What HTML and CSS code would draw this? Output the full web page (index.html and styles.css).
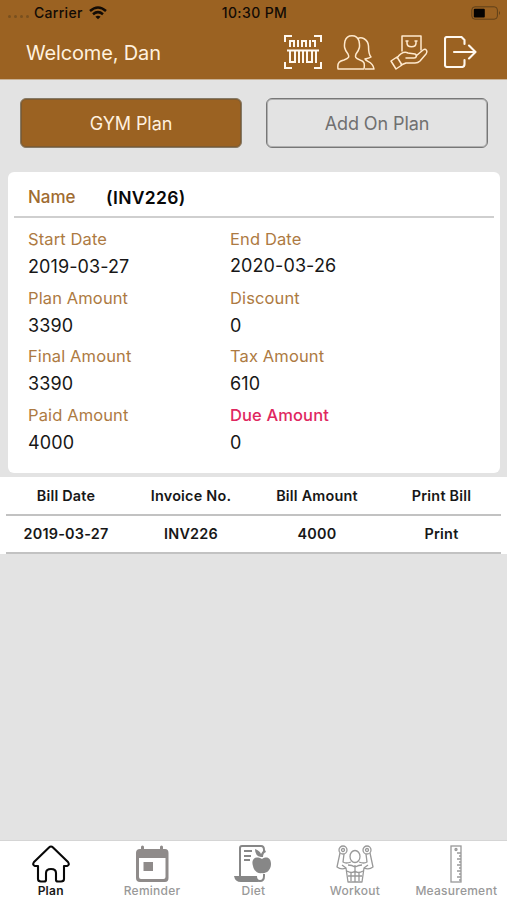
FILE: index.html
```html
<!DOCTYPE html>
<html lang="en">
<head>
<meta charset="utf-8">
<title>Gym Plan</title>
<link rel="stylesheet" href="styles.css">
</head>
<body>
<div class="app">
  <header class="header">
    <div class="status">
      <div class="carrier">
        <span class="dots"><i></i><i></i><i></i><i></i></span>
        <span class="carrier-name">Carrier</span>
        <svg class="wifi" width="18" height="14" viewBox="0 0 18 14" fill="none" stroke="#120b05" stroke-width="2.5"><path d="M1 5Q9-2 17 5M4 8.2Q9 4 14 8.2"/><path d="M6.4 10.7Q9 8.8 11.6 10.7L9 13.3Z" fill="#120b05" stroke="none"/></svg>
      </div>
      <time class="clock">10:30 PM</time>
      <svg class="battery" width="30" height="14" viewBox="0 0 30 14"><rect x=".8" y=".8" width="25.6" height="12.4" rx="3.2" fill="none" stroke="#604019"/><rect x="2.8" y="2.7" width="11" height="8.8" rx="1" fill="#050302"/><path d="M28 5Q30 7 28 9Z" fill="#604019"/></svg>
    </div>
    <div class="titlebar">
      <h1 class="welcome">Welcome, Dan</h1>
      <nav class="actions">
        <svg width="38" height="34" viewBox="0 0 38 34" fill="none" stroke="#fff8ef" stroke-width="2"><path d="M1 7V1H8M30 1H37V7M1 27V33H8M30 33H37V27M3 15.500H35"/><path d="M6 12V6H10V12M14 5V12M18 12V6H22V12M26 5V12M28 6H31V12M6 16V27H11V16M15 16V28M19 16V28M23 16V27H28V16M32 16V28"/></svg>
        <svg width="38" height="35" viewBox="0 0 38 35" fill="none" stroke="#ffe9cd" stroke-width="1.5" stroke-linejoin="round"><path d="M1 34C0 27 3 26 7 25C12 23 12.500 22 11 19C7 14 7 11 8 6C10-1 20-1 22 6C23 11 23 14 19 19C18 22 18 23 23 25C27 26 28 28 27 34Z"/><path d="M20.500 4C24 1 31 4 31.500 11C31.500 17 32 20 34 22C31 24 30 23 28 24C29 27 36 26 37 34H28"/></svg>
        <svg width="38" height="35" viewBox="0 0 38 35" fill="none" stroke="#ffe9cd" stroke-width="1.5" stroke-linejoin="round" stroke-linecap="round"><path d="M12 16V1H31V15M17 6V8C17 13 26 13 26 8V6M16 6H18M25 6H27"/><path d="M1 26L7 22L12 30L6 34ZM7 23C10 19 14 16 18 18L25 19C27 20 27 23 24 23H16M26 21L33 15C36 13 38 16 36 19L30 26Q28 28 25 28H16L11 30"/></svg>
        <svg class="exit" width="33" height="32" viewBox="0 0 33 32" fill="none" stroke="#fff8ef" stroke-width="2.1" stroke-linecap="round" stroke-linejoin="round"><path d="M20.500 8V4L17.500 1H3Q1 1 1 3V29Q1 31 3 31H18Q20.500 31 20.500 28V24M10 16H31M25 9.500L31.500 16L25 22.500"/></svg>
      </nav>
    </div>
  </header>

  <main class="content">
    <div class="switch">
      <button class="plan-button selected">GYM Plan</button>
      <button class="plan-button">Add On Plan</button>
    </div>
    <section class="card">
      <div class="card-head"><span class="name">Name</span><strong class="invoice">(INV226)</strong></div>
      <dl class="details">
        <div><dt>Start Date</dt><dd>2019-03-27</dd></div>
        <div class="raised"><dt>End Date</dt><dd>2020-03-26</dd></div>
        <div><dt>Plan Amount</dt><dd>3390</dd></div>
        <div><dt>Discount</dt><dd>0</dd></div>
        <div><dt>Final Amount</dt><dd>3390</dd></div>
        <div><dt>Tax Amount</dt><dd>610</dd></div>
        <div><dt>Paid Amount</dt><dd>4000</dd></div>
        <div class="due"><dt>Due Amount</dt><dd>0</dd></div>
      </dl>
    </section>
    <section class="bills">
      <div class="bill-row"><span>Bill Date</span><span>Invoice No.</span><span>Bill Amount</span><span>Print Bill</span></div>
      <div class="bill-row"><span>2019-03-27</span><span>INV226</span><span>4000</span><span>Print</span></div>
    </section>
  </main>

  <nav class="tabs">
    <a class="tab active"><svg width="38" height="38" viewBox="0 0 38 38" fill="none" stroke="#080808" stroke-width="2.1" stroke-linejoin="round"><path d="M17 2.500Q19 .5 21 2.500L36 17Q38 20 35 21H32V34Q32 36.500 29 36.500H26Q24 36.500 24 35V28Q24 24 19 24Q14 24 14 28V35Q14 36.500 12 36.500H9Q6 36.500 6 34V21H3Q0 20 2 17Z"/></svg><span>Plan</span></a>
    <a class="tab"><svg width="38" height="38" viewBox="0 0 38 38" fill="#8f8b8a"><path fill-rule="evenodd" d="M8 2Q8 .5 9.500 .5T11 2V4H27V2Q27 .5 28.500 .5T30 2V4H32Q35.500 4 35.500 8V33Q35.500 37 32 37H7Q3 37 3 33V8Q3 4 7 4H8ZM6 13V32Q6 34 8 34H30.500Q32.500 34 32.500 32V13Z"/><path d="M10.500 17H20V26H10.500Z"/></svg><span>Reminder</span></a>
    <a class="tab"><svg width="38" height="38" viewBox="0 0 38 38"><path d="M6 31V3Q6 1 8 1H27Q30 1 30 5V7M30 29V31Q30 36 26 36Q22 36 22 31" fill="none" stroke="#878787" stroke-width="2"/><path d="M0 31H22Q21 35 25 37H7Q1 37 0 31Z" fill="#878787"/><path d="M10 6H18M10 11H17M10 15H16" stroke="#878787" stroke-width="2"/><path d="M28 14C20 10 17 15 19 21C20 27 25 29 28 28C31 29 37 26 37 19C37 13 33 11 28 14ZM27 12Q21 11 21 4Q26 6 27 9Q28 6 31 5L32 7Q29 8 29 12Z" fill="#878787"/></svg><span>Diet</span></a>
    <a class="tab"><svg width="38" height="38" viewBox="0 0 38 38" fill="none" stroke="#999" stroke-width="1.3" stroke-linejoin="round"><circle cx="7" cy="5" r="4"/><circle cx="31" cy="5" r="4"/><circle cx="7" cy="5" r="1.500"/><circle cx="31" cy="5" r="1.500"/><ellipse cx="19" cy="11.500" rx="5" ry="6"/><path d="M4 8L1 22Q5 25 10 23L12 37H26L28 23Q33 25 37 22L34 8M8 9L7 17Q10 19 15 17M30 9L31 17Q28 19 23 17M12 20Q16 20 19 22Q23 20 26 20M19 20V37M11 26Q16 29 19 26Q22 29 27 26M12 31H26M15 27V36M23 27V36M6 20L10 23M32 20L28 23"/></svg><span>Workout</span></a>
    <a class="tab"><svg width="38" height="38" viewBox="0 0 38 38" fill="none" stroke="#999" stroke-width="1.3"><rect x="14" y="1" width="10" height="36"/><circle cx="19" cy="4.500" r="1"/><path d="M20 8H24M22 11H24M20 14H24M22 17H24M20 20H24M22 23H24M20 26H24M22 29H24M20 32H24M22 35H24"/></svg><span>Measurement</span></a>
  </nav>
</div>
</body>
</html>
```
FILE: styles.css
```css
* { box-sizing: border-box; }
body { margin: 0; font-family: Inter, "Liberation Sans", sans-serif; background: #e3e3e3; color: #171717; }
.app { height: 900px; display: flex; flex-direction: column; overflow: hidden; }
svg { display: block; flex: none; }
.header { height: 80px; background: #9b6222; border-bottom: 1px solid #c9b296; }
.status { height: 25px; display: grid; grid-template-columns: 1fr auto 1fr; align-items: center; padding: 0 6px 0 8px; color: #120b05; font-size: 14px; font-weight: 500; letter-spacing: .3px; }
.carrier { display: flex; align-items: center; }
.dots { display: flex; gap: 3px; width: 26px; padding-top: 8px; }
.dots i { width: 3px; height: 3px; border-radius: 50%; background: #79501e; }
.wifi { margin-left: 6px; }
.clock { letter-spacing: .4px; }
.battery { justify-self: end; }
.titlebar { height: 55px; display: flex; align-items: center; justify-content: space-between; padding: 0 30px 0 26px; }
.welcome { margin: 0; font-size: 20px; font-weight: 400; letter-spacing: -.15px; color: #fff1df; }
.actions { display: flex; align-items: center; gap: 15px; margin-top: -1px; }
.exit { margin-left: 1px; }
.content { flex: 1; }
.switch { display: grid; grid-template-columns: 222px 222px; gap: 24px; padding: 18px 0 0 20px; height: 92px; }
.plan-button { height: 50px; padding: 0; border: 1px solid #777; box-shadow: inset 0 0 0 1px #b0b0b0; border-radius: 6px; background: transparent; color: #707070; font: 400 18px Inter, sans-serif; letter-spacing: -.1px; }
.selected { background: #9b6222; color: #fff0df; border-color: #857966; box-shadow: inset 0 0 0 1px #7e5b31; }
.card { width: 492px; height: 301px; margin-left: 8px; background: #fff; border-radius: 6px; }
.card-head { height: 46px; margin: 0 6px; border-bottom: 2px solid #cfcfcf; display: flex; align-items: center; padding: 6px 14px 0; font-size: 17px; }
.name { width: 78px; color: #9f6b30; font-weight: 500; }
.invoice { font-size: 17.5px; font-weight: 600; letter-spacing: .3px; color: #080808; }
.details { margin: 0; padding: 8px 20px; display: grid; grid-template-columns: 202px 1fr; grid-auto-rows: 58.600px; }
dt { height: 27px; line-height: 27px; font-size: 16.5px; letter-spacing: .12px; color: #ad7a42; }
dd { height: 27px; line-height: 27px; margin: 0; font-size: 18px; letter-spacing: .1px; }
.raised dd { margin-top: -1px; }
.due dt { color: #df285f; font-weight: 500; }
.bills { margin-top: 4px; height: 77px; padding: 0 6px; background: #fff; }
.bill-row { height: 38.500px; border-bottom: 2px solid #c2c2c2; display: grid; grid-template-columns: 120px 130px 122px 1fr; align-items: center; text-align: center; font-size: 14.4px; font-weight: 600; letter-spacing: .22px; }
.bill-row span:last-child { padding-left: 4px; }
.tabs { height: 60px; display: grid; grid-template-columns: repeat(5, 1fr); background: #fff; border-top: 1px solid #d5d5d5; }
.tab { display: flex; flex-direction: column; align-items: center; padding-top: 4px; font-size: 12px; line-height: 15px; font-weight: 500; letter-spacing: .25px; color: #999; }
.active { color: #181818; font-weight: 600; }
```
